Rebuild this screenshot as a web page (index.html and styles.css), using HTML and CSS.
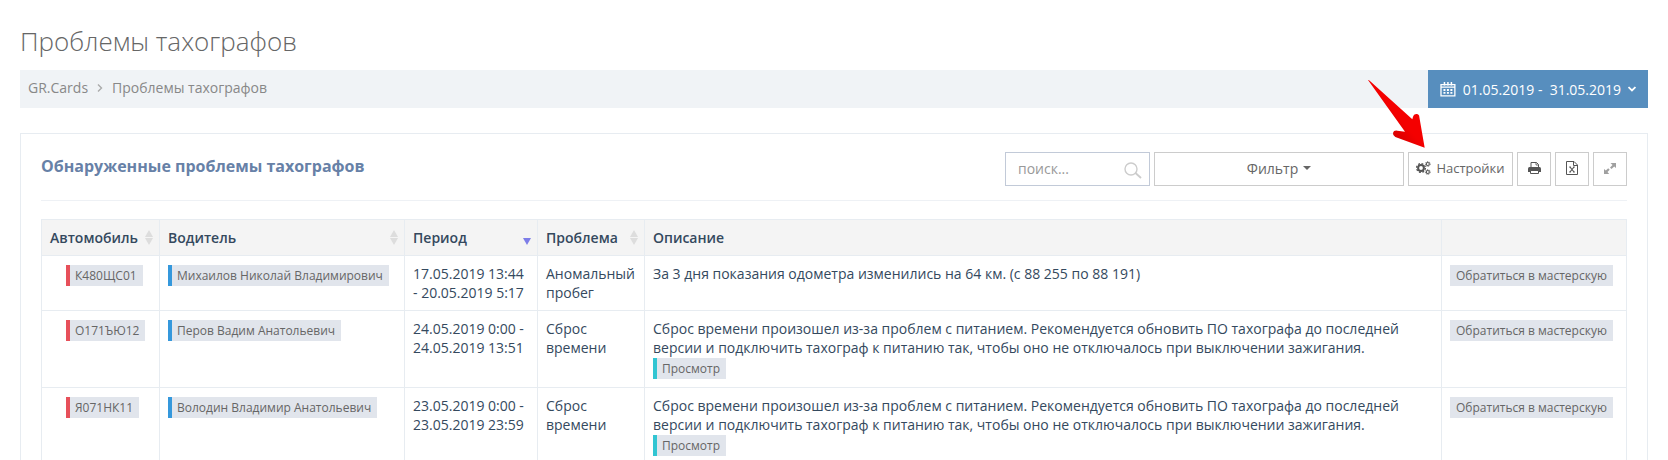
FILE: index.html
```html
<!DOCTYPE html>
<html lang="ru">

<head>
  <meta charset="UTF-8">
  <meta name="viewport" content="width=device-width, initial-scale=1.0">
  <title>Проблемы тахографов</title>
  <link rel="stylesheet" href="styles.css">
</head>

<body>

  <div class="page-content">
    <h1 class="page-title">Проблемы тахографов</h1>

    <!-- breadcrumbs and date range -->
    <div class="page-bar">
      <nav class="breadcrumb">
        <a href="#">GR.Cards</a>
        <svg class="icon-angle" width="6" height="8" viewBox="0 0 6 8"><path d="M1 0.5 L4.5 4 L1 7.5" /></svg>
        <a href="#">Проблемы тахографов</a>
      </nav>
      <button class="date-range" type="button">
        <svg width="16" height="15" viewBox="0 0 16 15" fill="none" stroke="#fff">
          <path d="M1 2.5h14v11.5h-14z M1 5h14" stroke-width="1.3" />
          <path d="M4.5 0v3.5 M8 0v3.5 M11.5 0v3.5" stroke-width="1.5" />
          <path d="M3.5 8h2 M7 8h2 M10.5 8h2 M3.5 11h2 M7 11h2 M10.5 11h2" stroke-width="1.8" />
        </svg>
        <span>01.05.2019 -&nbsp; 31.05.2019</span>
        <svg width="8" height="6" viewBox="0 0 8 6" fill="none" stroke="#fff" stroke-width="1.8"><path d="M0.5 1 L4 4.5 L7.5 1" /></svg>
      </button>
    </div>

    <div class="portlet">
      <div class="portlet-title">
        <h2>Обнаруженные проблемы тахографов</h2>

        <!-- toolbar -->
        <div class="actions">
          <div class="search">
            <input type="text" placeholder="поиск..." aria-label="Поиск">
            <svg width="18" height="17" viewBox="0 0 18 17" fill="none" stroke="#ccc"><circle cx="7" cy="7" r="6" stroke-width="1.4" /><path d="M11.5 11 L17 16" stroke-width="1.8" /></svg>
          </div>
          <button class="btn btn-filter" type="button">Фильтр <span class="caret"></span></button>
          <div class="settings">
            <button class="btn btn-settings" type="button">
              <svg width="15" height="14" viewBox="0 0 15 14" fill="none" stroke="#555">
                <circle cx="5" cy="7" r="2.9" stroke-width="2" />
                <circle cx="5" cy="7" r="4.4" stroke-width="1.3" stroke-dasharray="1.9 1.55" />
                <circle cx="11.8" cy="3" r="1.5" stroke-width="1.1" />
                <circle cx="11.8" cy="3" r="2.4" stroke-width="0.8" stroke-dasharray="1.1 0.78" />
                <circle cx="11.8" cy="11" r="1.5" stroke-width="1.1" />
                <circle cx="11.8" cy="11" r="2.4" stroke-width="0.8" stroke-dasharray="1.1 0.78" />
              </svg>
              Настройки
            </button>
            <svg class="arrow" width="58" height="69" viewBox="0 0 174 207">
              <defs>
                <linearGradient id="red" x1="0" y1="1" x2="1" y2="0">
                  <stop offset="0.25" stop-color="#d00000" />
                  <stop offset="0.5" stop-color="#f40000" />
                </linearGradient>
              </defs>
              <path fill="url(#red)" d="M0 0 Q2 -1 5 2 L133 118 L135 110 Q137 101 146 102 Q154 103 154 111 L170 203 L82 171 Q74 167 75 159 Q77 150 88 152 L111 155 Z" />
            </svg>
          </div>
          <button class="btn btn-icon" type="button" aria-label="Печать">
            <svg width="13" height="12" viewBox="0 0 13 12">
              <path d="M3 6 V0.5 H8.5 L10.5 2.5 V6" fill="none" stroke="#555" />
              <path d="M8 0.5 V3 H10.5" fill="none" stroke="#555" stroke-width="0.8" />
              <path d="M0 6.5 Q0 5 1.5 5 H11.5 Q13 5 13 6.5 V10 H0 Z" fill="#555" />
              <path d="M2.5 8.5 H10.5 V11.5 H2.5 Z" fill="#fff" stroke="#555" />
            </svg>
          </button>
          <button class="btn btn-icon" type="button" aria-label="Экспорт в Excel">
            <svg width="12" height="14" viewBox="0 0 12 14" fill="none" stroke="#555">
              <path d="M0.5 0.5 H8 L11.5 4 V13.5 H0.5 Z M7.5 0.5 V4.5 H11.5" />
              <path d="M4 6 L8 11 M8 6 L4 11" stroke-width="1.2" />
              <path d="M3 6 H5 M7 6 H9 M3 11 H5 M7 11 H9" stroke-width="0.8" />
            </svg>
          </button>
          <button class="btn btn-icon" type="button" aria-label="На весь экран">
            <svg width="12" height="11" viewBox="0 0 12 11" fill="#a0a0a0">
              <path d="M6.5 0 H12 V5 L10.2 3.5 L7.5 6 L6 4.6 L8.5 2 Z M0 6 L1.8 7.5 L4.2 5.3 L5.7 6.7 L3.5 9 L5.2 11 H0 Z" />
            </svg>
          </button>
        </div>
      </div>

      <!-- problems -->
      <table class="problems">
        <thead>
          <tr>
            <th class="col-car"><div class="head">Автомобиль <span class="sort"></span></div></th>
            <th class="col-driver"><div class="head">Водитель <span class="sort"></span></div></th>
            <th class="col-period"><div class="head">Период <span class="sort sort-desc"></span></div></th>
            <th class="col-problem"><div class="head">Проблема <span class="sort"></span></div></th>
            <th>Описание</th>
            <th class="col-action"></th>
          </tr>
        </thead>
        <tbody>
          <tr>
            <td class="car"><a href="#" class="tag tag-red">К480ЩС01</a></td>
            <td><a href="#" class="tag tag-blue">Михаилов Николай Владимирович</a></td>
            <td>17.05.2019 13:44 - 20.05.2019 5:17</td>
            <td>Аномальный пробег</td>
            <td>За 3 дня показания одометра изменились на 64 км. (с 88 255 по 88 191)</td>
            <td><button class="tag" type="button">Обратиться в мастерскую</button></td>
          </tr>
          <tr>
            <td class="car"><a href="#" class="tag tag-red">О171ЪЮ12</a></td>
            <td><a href="#" class="tag tag-blue">Перов Вадим Анатольевич</a></td>
            <td>24.05.2019 0:00 - 24.05.2019 13:51</td>
            <td>Сброс времени</td>
            <td>
              Сброс времени произошел из-за проблем с питанием. Рекомендуется обновить ПО тахографа до последней версии и подключить тахограф к питанию так, чтобы оно не отключалось при выключении зажигания.
              <div><a href="#" class="tag tag-teal">Просмотр</a></div>
            </td>
            <td><button class="tag" type="button">Обратиться в мастерскую</button></td>
          </tr>
          <tr>
            <td class="car"><a href="#" class="tag tag-red">Я071НК11</a></td>
            <td><a href="#" class="tag tag-blue">Володин Владимир Анатольевич</a></td>
            <td>23.05.2019 0:00 - 23.05.2019 23:59</td>
            <td>Сброс времени</td>
            <td>
              Сброс времени произошел из-за проблем с питанием. Рекомендуется обновить ПО тахографа до последней версии и подключить тахограф к питанию так, чтобы оно не отключалось при выключении зажигания.
              <div><a href="#" class="tag tag-teal">Просмотр</a></div>
            </td>
            <td><button class="tag" type="button">Обратиться в мастерскую</button></td>
          </tr>
        </tbody>
      </table>
    </div>
  </div>

</body>

</html>
```
FILE: styles.css
```css
* {
  box-sizing: border-box;
}

body {
  margin: 0;
  background-color: #fff;
  font-family: "Open Sans", sans-serif;
  font-size: 14px;
  line-height: 19px;
  color: #34495e;
}

a {
  text-decoration: none;
}

button,
input {
  font-family: inherit;
  font-size: 14px;
}

.page-content {
  padding: 22px 20px 0;
}

.page-title {
  margin: 0 0 10px;
  font-size: 26px;
  line-height: 38px;
  font-weight: 300;
  color: #666;
}

/* breadcrumbs */
.page-bar {
  display: flex;
  justify-content: space-between;
  height: 38px;
  margin-bottom: 25px;
  background-color: #f0f3f6;
}

.breadcrumb {
  display: flex;
  align-items: center;
  gap: 9px;
  padding: 0 8px 3px;
}

.breadcrumb a {
  color: #888;
}

.icon-angle {
  fill: none;
  stroke: #aaa;
  stroke-width: 1.4;
}

.date-range {
  display: flex;
  align-items: center;
  gap: 7px;
  width: 220px;
  padding: 0 12px;
  border: none;
  background-color: #578ebe;
  color: #fff;
  white-space: nowrap;
  cursor: pointer;
}

/* portlet */
.portlet {
  padding: 18px 20px 20px;
  border: 1px solid #e7ecf1;
}

.portlet-title {
  display: flex;
  justify-content: space-between;
  height: 49px;
  margin-bottom: 18px;
  border-bottom: 1px solid #eef1f5;
}

.portlet-title h2 {
  margin: 0;
  padding-top: 4px;
  font-size: 16px;
  line-height: 20px;
  font-weight: 700;
  color: #6781a7;
}

.actions {
  display: flex;
  gap: 4px;
}

.search {
  position: relative;
  width: 145px;
  height: 34px;
}

.search input {
  width: 100%;
  height: 34px;
  padding: 0 36px 2px 12px;
  border: 1px solid #c2cad8;
  color: #555;
}

.search input::placeholder {
  color: #999;
}

.search svg {
  position: absolute;
  top: 10px;
  right: 8px;
}

.btn {
  display: flex;
  align-items: center;
  justify-content: center;
  gap: 5px;
  height: 34px;
  padding: 0 0 2px;
  border: 1px solid #ccc;
  background-color: #fff;
  color: #666;
  cursor: pointer;
}

.btn-filter {
  width: 250px;
}

.btn-settings {
  width: 105px;
  font-size: 13px;
}

.btn-icon {
  width: 34px;
}

.caret {
  border-top: 4px solid #666;
  border-left: 4px solid transparent;
  border-right: 4px solid transparent;
}

.settings {
  position: relative;
}

.arrow {
  position: absolute;
  top: -72px;
  left: -40px;
  overflow: visible;
  pointer-events: none;
}

/* table */
.problems {
  width: 100%;
  border-collapse: collapse;
  table-layout: fixed;
}

.problems th,
.problems td {
  padding: 8px;
  border: 1px solid #e7ecf1;
  text-align: left;
  vertical-align: top;
}

.problems th {
  height: 36px;
  background-color: #f4f4f4;
  font-weight: 600;
}

.problems .car {
  padding-left: 24px;
}

.col-car {
  width: 118px;
}

.col-driver {
  width: 245px;
}

.col-period {
  width: 133px;
}

.col-problem {
  width: 107px;
}

.col-action {
  width: 185px;
}

.head {
  display: flex;
  justify-content: space-between;
  align-items: center;
  margin-right: -2px;
}

.sort {
  display: flex;
  flex-direction: column;
  gap: 1px;
}

.sort::before,
.sort::after {
  content: "";
  border-left: 4px solid transparent;
  border-right: 4px solid transparent;
}

.sort::before {
  border-bottom: 7px solid #ddd;
}

.sort::after {
  border-top: 7px solid #ddd;
}

.sort-desc::before {
  border-bottom-color: transparent;
}

.sort-desc::after {
  border-top-color: #7d7de8;
}

.tag {
  display: inline-block;
  height: 21px;
  margin: 1px 0 0;
  padding: 0 6px;
  border: none;
  background-color: #e1e5ec;
  font-size: 12px;
  line-height: 21px;
  color: #666;
  white-space: nowrap;
  vertical-align: top;
}

.tag-red,
.tag-blue,
.tag-teal {
  padding-left: 5px;
  border-left: 4px solid #e7505a;
}

.tag-blue {
  border-left-color: #3598dc;
}

.tag-teal {
  border-left-color: #32c5d2;
}
```
